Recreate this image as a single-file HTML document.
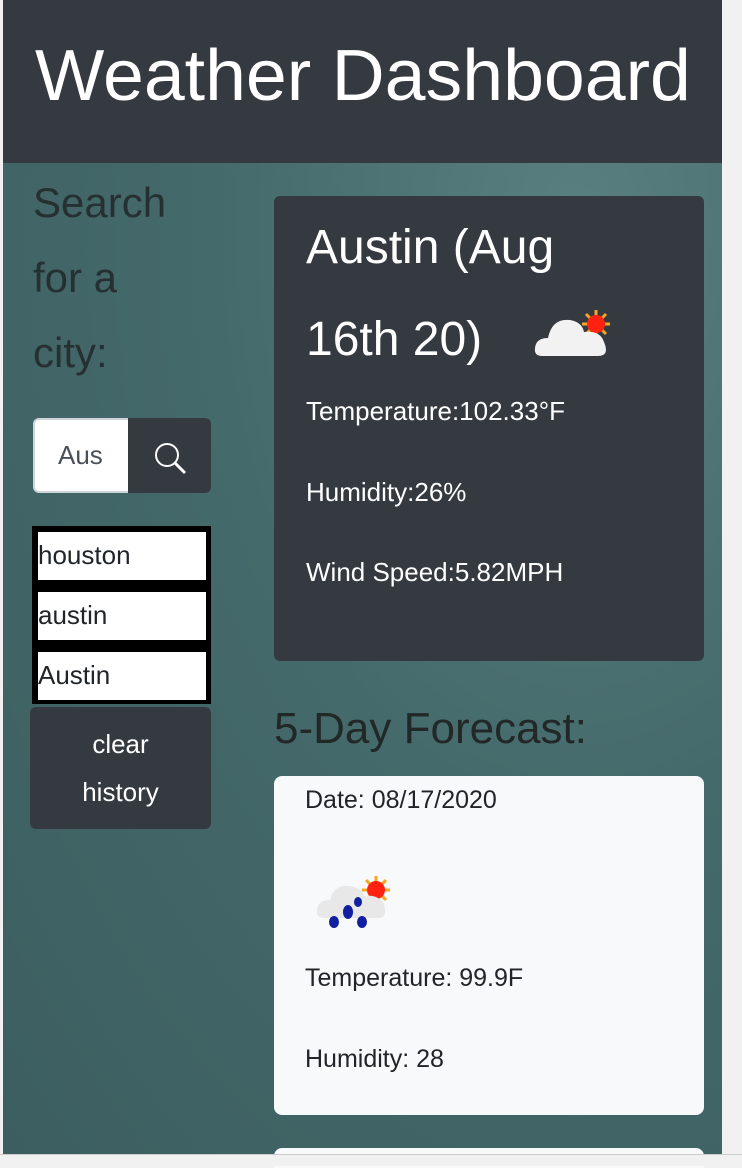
<!DOCTYPE html>
<html><head><meta charset="utf-8"><style>
*{margin:0;padding:0;box-sizing:border-box}
body{width:742px;height:1166px;overflow:hidden;background:#f1f1f1;font-family:"Liberation Sans",sans-serif;position:relative}
.bg{position:absolute;left:3px;top:0;width:719px;height:1154px;background:radial-gradient(ellipse at 80% 20%,#5a7f80 0%,#456a6b 45%,#3c5e60 100%)}
.hdr{position:absolute;left:3px;top:0;width:719px;height:163px;background:#343a40}
.a{position:absolute;white-space:nowrap}
.dark{background:#343a40}
.w{color:#fff}
.t{color:#212529}
</style></head><body>
<div class="bg"></div>
<div class="hdr"></div>
<div class="a w" style="left:35px;top:34px;font-size:72px;line-height:84px;transform-origin:left;transform:scaleX(1.02)">Weather Dashboard</div>

<div class="a" style="left:33px;top:165px;font-size:42px;line-height:75px;color:#263032;white-space:normal;width:170px">Search<br>for a<br>city:</div>

<div class="a" style="left:33px;top:418px;width:96px;height:75px;background:#fff;border:2px solid #ced4da;border-right:none;border-radius:6px 0 0 6px"></div>
<div class="a t" style="left:58px;top:440px;font-size:26px;color:#495057;width:68px;overflow:hidden">Aus</div>
<div class="a dark" style="left:128px;top:418px;width:83px;height:75px;border-radius:0 6px 6px 0"></div>
<svg class="a" style="left:152px;top:440px" width="36" height="36" viewBox="0 0 36 36"><circle cx="15" cy="15" r="11" fill="none" stroke="#fff" stroke-width="2"/><line x1="23" y1="23" x2="33" y2="33" stroke="#fff" stroke-width="3"/></svg>

<div class="a" style="left:32px;top:526px;width:179px;height:178px;background:#000"></div>
<div class="a" style="left:38px;top:532px;width:168px;height:48px;background:#fff"></div>
<div class="a" style="left:38px;top:592px;width:168px;height:48px;background:#fff"></div>
<div class="a" style="left:38px;top:652px;width:168px;height:48px;background:#fff"></div>
<div class="a t" style="left:38px;top:540px;font-size:26px">houston</div>
<div class="a t" style="left:38px;top:600px;font-size:26px">austin</div>
<div class="a t" style="left:38px;top:660px;font-size:26px">Austin</div>

<div class="a dark" style="left:30px;top:707px;width:181px;height:122px;border-radius:6px"></div>
<div class="a w" style="left:30px;top:720px;width:181px;text-align:center;font-size:26px;line-height:48px;white-space:normal">clear<br>history</div>

<div class="a dark" style="left:274px;top:196px;width:430px;height:465px;border-radius:6px"></div>
<div class="a w" style="left:306px;top:202px;font-size:48px;line-height:92px">Austin (Aug<br>16th 20)</div>
<svg class="a" style="left:532px;top:308px" width="82" height="52" viewBox="0 0 82 52"><g stroke="#f5a623" stroke-width="3"><line x1="64" y1="2" x2="64" y2="30"/><line x1="50" y1="16" x2="78" y2="16"/><line x1="54" y1="6" x2="74" y2="26"/><line x1="74" y1="6" x2="54" y2="26"/></g><circle cx="64" cy="16" r="9" fill="#f21"/><path d="M10 48 Q2 48 3 40 Q4 30 16 30 Q20 10 38 12 Q50 14 52 24 Q68 22 72 34 Q78 48 66 48 Z" fill="#f2f2f2"/></svg>
<div class="a w" style="left:306px;top:396px;font-size:26px">Temperature:102.33°F</div>
<div class="a w" style="left:306px;top:477px;font-size:26px">Humidity:26%</div>
<div class="a w" style="left:306px;top:557px;font-size:26px">Wind Speed:5.82MPH</div>

<div class="a" style="left:274px;top:704px;font-size:44px;color:#222828">5-Day Forecast:</div>

<div class="a" style="left:274px;top:776px;width:430px;height:339px;background:#f8f9fa;border-radius:8px"></div>
<div class="a t" style="left:305px;top:786px;font-size:25px">Date: 08/17/2020</div>
<svg class="a" style="left:314px;top:872px" width="80" height="62" viewBox="0 0 80 62"><g stroke="#f5a623" stroke-width="3"><line x1="62" y1="4" x2="62" y2="32"/><line x1="48" y1="18" x2="76" y2="18"/><line x1="52" y1="8" x2="72" y2="28"/><line x1="72" y1="8" x2="52" y2="28"/></g><circle cx="62" cy="18" r="9" fill="#f21"/><path d="M10 46 Q2 46 3 38 Q4 28 16 28 Q20 12 36 14 Q48 16 50 24 Q64 22 70 32 Q74 46 64 46 Z" fill="#e8e8e8"/><g fill="#1020a0"><ellipse cx="34" cy="40" rx="5" ry="7"/><ellipse cx="20" cy="50" rx="5" ry="6"/><ellipse cx="48" cy="50" rx="5" ry="6"/><ellipse cx="44" cy="30" rx="4" ry="5"/></g></svg>
<div class="a t" style="left:305px;top:964px;font-size:25px">Temperature: 99.9F</div>
<div class="a t" style="left:305px;top:1045px;font-size:25px">Humidity: 28</div>

<div class="a" style="left:274px;top:1148px;width:430px;height:20px;background:#f8f9fa;border-radius:8px 8px 0 0"></div>
<div class="a" style="left:0;top:1154px;width:742px;height:12px;background:#f1f1f1;border-top:1px solid #ccc"></div>
</body></html>
